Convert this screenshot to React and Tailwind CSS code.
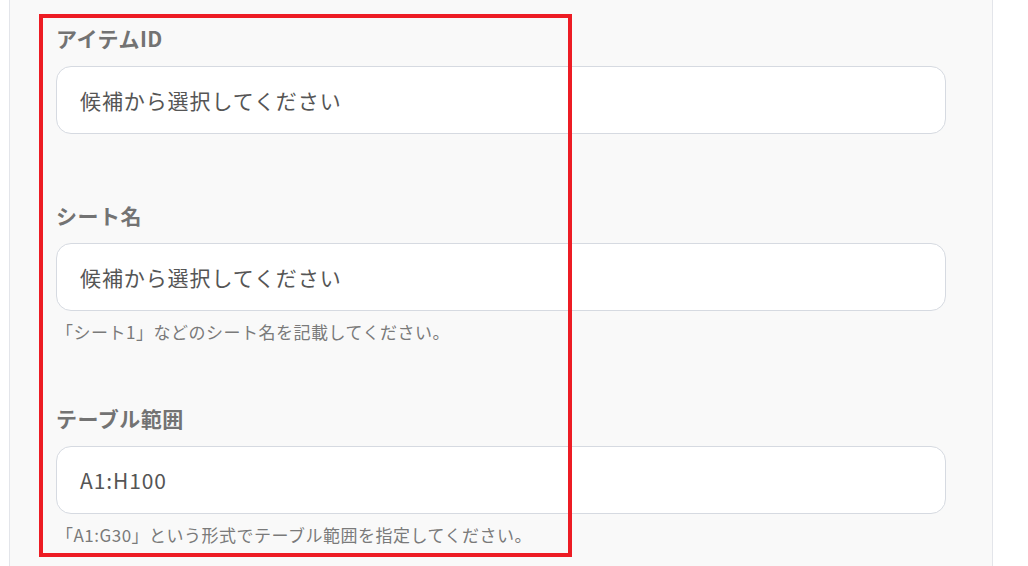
const fields = [
  { label: 'アイテムID', value: '候補から選択してください', help: null },
  { label: 'シート名', value: '候補から選択してください', help: '「シート1」などのシート名を記載してください。' },
  { label: 'テーブル範囲', value: 'A1:H100', help: '「A1:G30」という形式でテーブル範囲を指定してください。' },
]

export default function App() {
  return (
    <div
      className="relative h-[566px] w-[1028px] overflow-hidden bg-white"
      style={{ fontFamily: '"Noto Sans CJK JP", "Noto Sans", sans-serif' }}
    >
      {/* パネル */}
      <div className="ml-[9px] h-full w-[984px] border-x border-[#e3e5ea] bg-[#f9f9f9] px-[46px] pt-[24px]">
        {fields.map((f, i) => (
          <div key={f.label} className={i === 0 ? 'mb-[67px]' : 'mb-[60px]'}>
            <div className="h-[28px] text-[21px] font-bold leading-[28px] tracking-[0.5px] text-[#737373]">
              {f.label}
            </div>
            <div className="mt-[14px] flex h-[68px] items-center rounded-[15px] border border-[#d6dae1] bg-white px-[23px] pt-px text-[21px] tracking-[0.9px] text-[#555555]">
              {f.value}
            </div>
            {f.help && (
              <div className="mt-[9px] h-[24px] text-[17px] leading-[24px] tracking-[0.5px] text-[#7a7a7a]">
                {f.help}
              </div>
            )}
          </div>
        ))}
      </div>

      {/* 赤枠 */}
      <div className="absolute left-[39px] top-[14px] h-[543px] w-[533px] border-[4px] border-[#ed1c24]" />
    </div>
  )
}
